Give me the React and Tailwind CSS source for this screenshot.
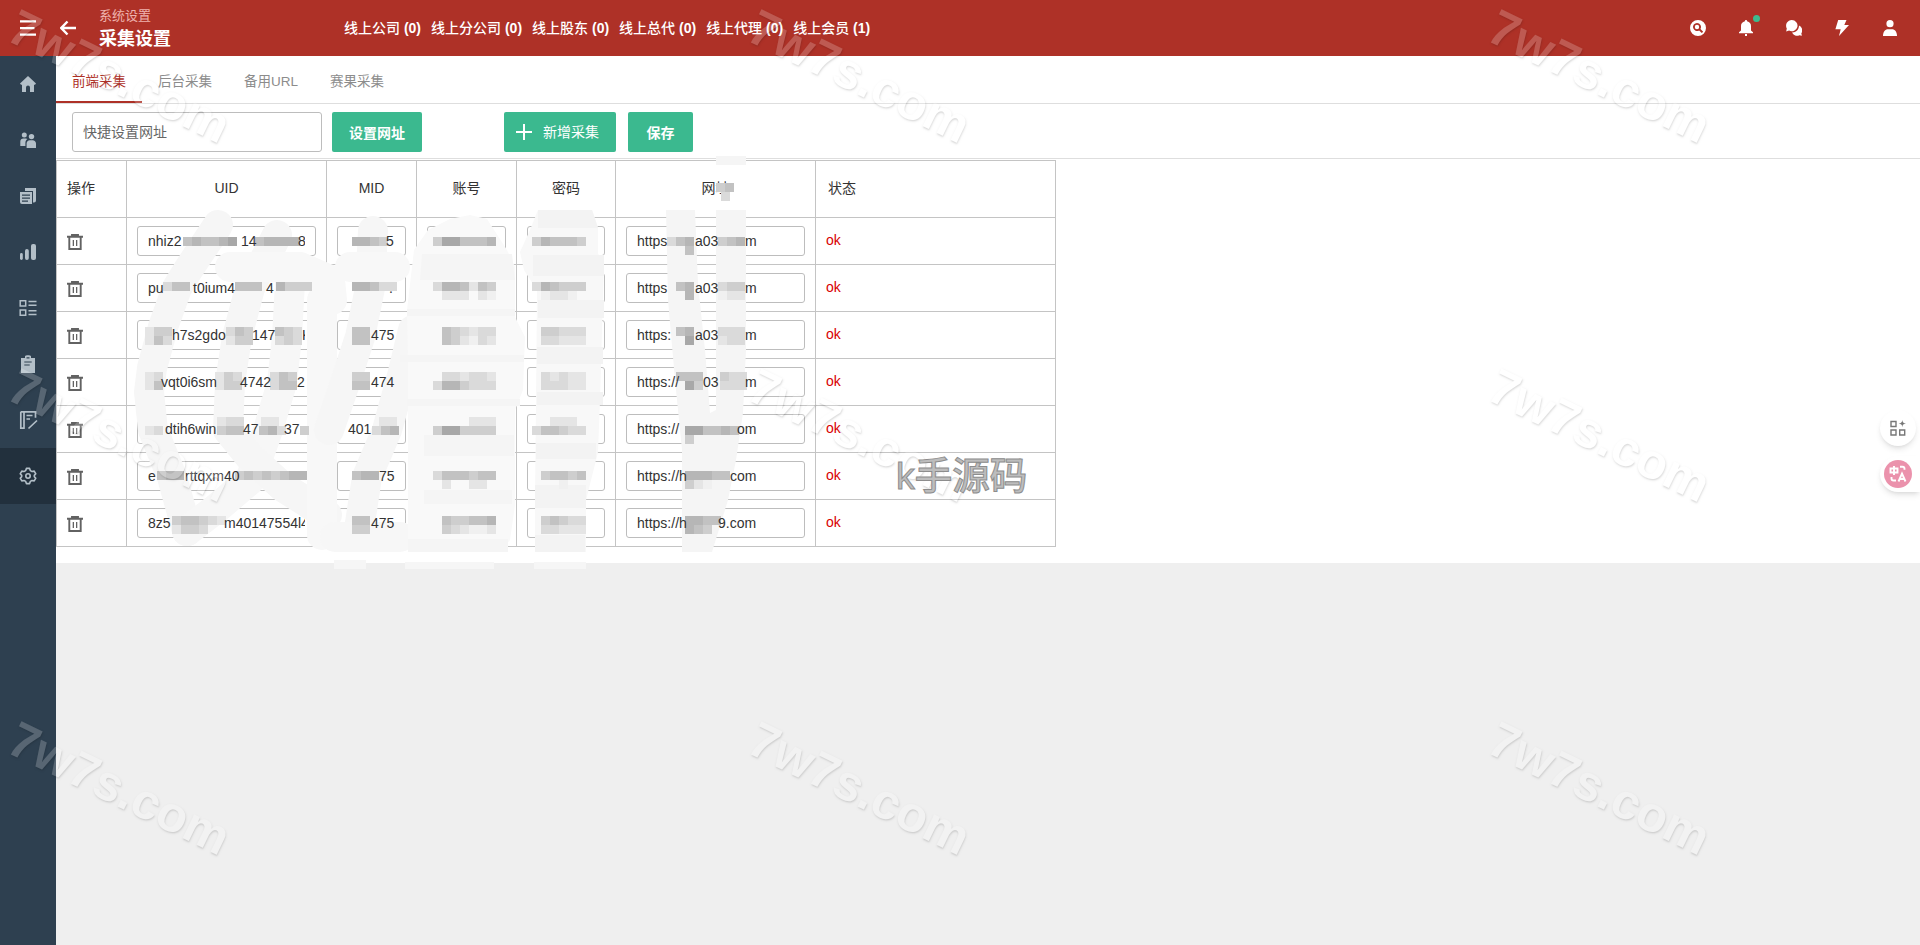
const onlineStats = [
  ['线上公司', 0],
  ['线上分公司', 0],
  ['线上股东', 0],
  ['线上总代', 0],
  ['线上代理', 0],
  ['线上会员', 1],
]

const tabs = ['前端采集', '后台采集', '备用URL', '赛果采集']

// every value is a list of [text, width] runs, the masked parts are empty runs
const rows = [
  {
    uid: [['nhiz2', 93], ['14', 57], ['8', 10]],
    mid: [['', 38], ['5', 9]],
    url: [['https', 58], ['a03', 50], ['m', 14]],
  },
  {
    uid: [['pu', 45], ['t0ium4', 73], ['4', 12]],
    mid: [['', 41], ['.', 5]],
    url: [['https', 58], ['a03', 50], ['m', 14]],
  },
  {
    uid: [['', 24], ['h7s2gdo', 80], ['147', 50], ['K', 10]],
    mid: [['', 23], ['475', 24]],
    url: [['https:', 58], ['a03', 50], ['m', 14]],
  },
  {
    uid: [['', 13], ['vqt0i6sm', 79], ['4742', 57], ['2', 10]],
    mid: [['', 23], ['474', 24]],
    url: [['https://', 66], ['03', 42], ['m', 14]],
  },
  {
    uid: [['', 17], ['dtih6win', 78], ['47', 41], ['37', 20]],
    mid: [['401', 40]],
    url: [['https://', 100], ['om', 22]],
  },
  {
    uid: [['e', 37], ['rttqxm40', 90]],
    mid: [['', 31], ['75', 17]],
    url: [['https://h', 93], ['com', 30]],
  },
  {
    uid: [['8z5', 76], ['m40147554l4', 90]],
    mid: [['', 23], ['475', 24]],
    url: [['https://h', 81], ['9.com', 42]],
  },
]

const shades = {
  1: '#f0f0f0',
  2: '#e5e5e5',
  3: '#dadada',
  4: '#cecece',
  5: '#c2c2c2',
  6: '#b6b6b6',
  7: '#a8a8a8',
}

// [x, y, one shade for each 9px cell]
const mosaic = [
  [716, 183, '45'], [721, 192, '3'],
  [183, 237, '565567'], [255, 237, '56666'], [352, 237, '6654'], [433, 237, '4775556'], [532, 237, '465554'],
  [667, 237, '356'], [685, 246, '5'], [718, 237, '456'],
  [163, 282, '355'], [235, 282, '555'], [276, 282, '6444'], [352, 282, '66533'], [433, 282, '3665254'],
  [442, 291, '222021'], [532, 282, '365444'], [541, 291, '1221'], [676, 282, '56'], [685, 291, '6'],
  [718, 282, '344'], [718, 291, '122'],
  [145, 327, '244'], [145, 336, '253'], [226, 327, '354'], [226, 336, '244'], [275, 327, '543'], [275, 336, '343'],
  [352, 327, '55'], [352, 336, '55'], [442, 327, '543233'], [442, 336, '542132'], [541, 327, '44333'], [541, 336, '33222'],
  [676, 327, '56'], [685, 336, '7'], [718, 327, '333'], [718, 336, '233'],
  [145, 372, '23'], [145, 381, '25'], [215, 372, '243'], [215, 381, '244'], [270, 372, '354'], [270, 381, '355'],
  [352, 372, '44'], [352, 381, '55'], [442, 372, '332332'], [433, 381, '3664333'], [541, 372, '32322'], [541, 381, '33322'],
  [676, 372, '555'], [685, 381, '74'], [720, 372, '433'], [720, 381, '333'],
  [145, 426, '23'], [217, 417, '233'], [217, 426, '455'], [261, 417, '22'], [259, 426, '563'], [300, 426, '4'],
  [379, 417, '22'], [372, 426, '356'], [433, 426, '4774444'], [469, 417, '222'], [532, 426, '355433'], [550, 417, '222'],
  [685, 426, '775565'], [685, 435, '4'],
  [157, 471, '566'], [235, 471, '45454566'], [352, 471, '566'], [433, 471, '3555455'], [442, 480, '20022'],
  [541, 471, '45545'], [559, 480, '1'], [685, 471, '66655'], [685, 480, '421'],
  [172, 516, '455432'], [172, 525, '2443'], [352, 516, '55'], [352, 525, '44'], [442, 516, '544556'], [442, 525, '432112'],
  [541, 516, '45433'], [541, 525, '33222'], [685, 516, '6655'], [685, 525, '654'],
]

const watermarks = [
  'left-[12px] -top-px',
  'left-[752px] -top-px',
  'left-[1492px] -top-px',
  'left-[12px] top-[358px]',
  'left-[752px] top-[358px]',
  'left-[1492px] top-[358px]',
  'left-[12px] top-[711px]',
  'left-[752px] top-[711px]',
  'left-[1492px] top-[711px]',
]

const Icon = ({ children, className = 'size-4' }) => (
  <svg viewBox="0 0 16 16" fill="currentColor" className={className}>
    {children}
  </svg>
)

const Header = () => (
  <header className="flex h-14 shrink-0 items-center bg-[#ae3127] pl-5 pr-[22px] text-white">
    <Icon>
      <path d="M0 .3h16v2.300H0zM0 6.900h14.500v2.300H0zM0 13.400h16v2.300H0z" />
    </Icon>
    <Icon className="ml-6 size-4">
      <path d="M7.500 1.500 1.300 8l6.200 6.500M1.500 8H16" fill="none" stroke="currentColor" strokeWidth="2.400" />
    </Icon>
    <div className="ml-[23px] w-[245px] pt-[2px]">
      <div className="text-[13px] leading-[17px] text-[#efb3ae]">系统设置</div>
      <div className="pt-[2px] text-lg font-bold leading-[26px]">采集设置</div>
    </div>
    <div className="flex gap-[10px] text-sm font-medium">
      {onlineStats.map(([name, count]) => (
        <span key={name} className="whitespace-nowrap">
          {name} <b>({count})</b>
        </span>
      ))}
    </div>
    <div className="ml-auto flex items-center gap-8">
      <Icon>
        <path fillRule="evenodd" d="M8 0a8 8 0 1 1 0 16A8 8 0 0 1 8 0Zm-1 3a4 4 0 1 0 2.100 7.400l2.700 2.700 1.400-1.400-2.700-2.700A4 4 0 0 0 7 3Zm0 1.800a2.200 2.200 0 1 1 0 4.400 2.200 2.200 0 0 1 0-4.400Z" />
      </Icon>
      <div className="relative">
        <Icon>
          <path d="M8 0c.7 0 1 .5 1.100 1.200C11.600 1.800 13 3.500 13 6v4.500l2 1.800v1H1v-1l2-1.800V6c0-2.500 1.400-4.200 3.900-4.800C7 .5 7.300 0 8 0ZM7 14h2v2H7z" />
        </Icon>
        <span className="absolute -right-[6px] -top-[5px] size-[7px] rounded-full bg-[#3dbb8e]" />
      </div>
      <Icon>
        <path d="M5.800 0a5.800 5.600 0 1 1-2.700 10.600L.2 11.400l.6-2.900A5.700 5.700 0 0 1 5.800 0Z" />
        <path d="M13 5.600a5 5 0 0 1 2.300 7.600l.6 2.600-2.500-.5A5.500 5.500 0 0 1 6 12.600c4 .2 7-3 7-7Z" />
      </Icon>
      <Icon>
        <path d="M4.200 0h8.300L10.300 5H15L5 16l1.700-6.800H1.400z" />
      </Icon>
      <Icon>
        <circle cx="8" cy="3.700" r="3.600" />
        <path d="M1 16c0-4.200 2.200-6.800 5-6.800h4c2.800 0 5 2.600 5 6.800z" />
      </Icon>
    </div>
  </header>
)

const menuIcons = [
  <path d="m8 0 8 7.500-1 1.200h-1V16h-4v-4.500a2 2 0 0 0-4 0V16H2V8.700H1L0 7.500z" />,
  <>
    <circle cx="4.300" cy="2.900" r="2.500" />
    <circle cx="11.500" cy="4.600" r="2.700" />
    <path d="M.3 14V9.500C.3 7.500 1.700 6.500 3.300 6.500h2.500c.7 0 1.200.2 1.600.6C6 8 5.400 9.300 5.400 11v3zM6.600 16v-4.500c0-2 1.400-3.300 3.200-3.300h2.900c1.800 0 3.300 1.300 3.300 3.300V16z" />
  </>,
  <>
    <path d="M5 0h11v12.500a2 2 0 0 1-2 2h-1V3H5z" />
    <path fillRule="evenodd" d="M0 4h12v12H2a2 2 0 0 1-2-2zm2 2.600v1.200h8V6.600zm0 3v1.200h8V9.600zm0 3v1.200h6v-1.200z" />
  </>,
  <>
    <rect x="0" y="9" width="2.800" height="7" rx="1.400" />
    <rect x="5" y="5" width="3.800" height="11" rx="1.900" />
    <rect x="11" y="0" width="5" height="16" rx="2" />
  </>,
  <path d="M.2.7h5.500v5.200H.2zM.2 10h5.500v5.200H.2zM8.500 1.500h8M8.500 5.300h8M8.500 10.800h8M8.500 14.600h8" fill="none" stroke="currentColor" strokeWidth="1.500" />,
  <path fillRule="evenodd" d="M5 .3C5.500-1 10.500-1 11 .3V2h4v15H1V2h4zm1.500.9v1.400h3V1.200zM4.300 5.400v1.200h7.400V5.400zm0 3v1.200h5.400V8.400z" />,
  <path d="M.8-.2h14.700v6M.8-.2v16.400h4M4-.2v16.400M6.500 3.500h6M6.500 7h3.500M8.500 16.500l8.500-8" fill="none" stroke="currentColor" strokeWidth="1.700" />,
  <>
    <path d="M6.400.4h3.200l.7 2.200 1.700.9 2.200-.4 1.600 2.700-1.500 1.600v1.200l1.500 1.600-1.600 2.700-2.200-.4-1.700.9-.7 2.200H6.400l-.7-2.200-1.700-.9-2.200.4-1.600-2.700 1.500-1.600V7.400L.2 5.800l1.600-2.700 2.200.4 1.700-.9z" fill="none" stroke="currentColor" strokeWidth="1.600" strokeLinejoin="round" />
    <circle cx="8" cy="8" r="2.200" fill="none" stroke="currentColor" strokeWidth="1.600" />
  </>,
]

const Sidebar = () => (
  <nav className="w-14 shrink-0 bg-[#2e4050] text-[#b3bfc8]">
    {menuIcons.map((icon, i) => (
      <div
        key={i}
        className={i === 7 ? 'flex h-14 items-center justify-center bg-[#22303d]' : 'flex h-14 items-center justify-center'}
      >
        <Icon className="size-4 overflow-visible">{icon}</Icon>
      </div>
    ))}
  </nav>
)

const Tabs = () => (
  <div className="flex h-12 border-b border-[#dedede] text-[13.500px] text-[#8c8c8c]">
    {tabs.map((tab, i) => (
      <div
        key={tab}
        className={
          i === 0
            ? 'flex w-[86px] items-center justify-center border-b-2 border-[#ae3127] pt-[7px] text-[#ae3127]'
            : 'flex w-[86px] items-center justify-center pt-[5px]'
        }
      >
        {tab}
      </div>
    ))}
  </div>
)

const Toolbar = () => (
  <div className="flex h-[55px] items-center border-b border-[#dedede] pl-4 pt-[2px] text-sm">
    <div className="flex h-10 w-[250px] items-center rounded-[3px] border border-[#bdbdbd] px-[10px] text-[#666]">
      快捷设置网址
    </div>
    <button className="ml-[10px] h-10 w-[90px] rounded-xs bg-[#3bb98f] pt-px font-bold text-white">设置网址</button>
    <button className="ml-[82px] flex h-10 w-28 items-center rounded-xs bg-[#3bb98f] pl-3 text-white">
      <Icon>
        <path d="M7 0h2v7h7v2H9v7H7V9H0V7h7z" />
      </Icon>
      <span className="ml-[11px]">新增采集</span>
    </button>
    <button className="ml-3 h-10 w-[65px] rounded-xs bg-[#3bb98f] pt-px font-bold text-white">保存</button>
  </div>
)

const Field = ({ runs = [] }) => (
  <div className="h-[30px] overflow-hidden whitespace-nowrap rounded-[3px] border border-[#bdbdbd] px-[10px] leading-7 text-[#333]">
    <div className="relative z-10 overflow-hidden">
      {runs.map(([text, width], i) => (
        <span key={i} className="inline-block h-7 align-top" style={{ width }}>
          {text}
        </span>
      ))}
    </div>
  </div>
)

const TrashIcon = () => (
  <Icon className="mt-px size-4 text-[#626262]">
    <path d="M0 2.800h16M2.300 3v12h11.400V3M5 2.500V.8h6v1.700" fill="none" stroke="currentColor" strokeWidth="1.900" />
    <path d="M5.700 6h1.300v6H5.700zM9 6h1.300v6H9z" />
  </Icon>
)

const Mask = () => (
  <svg viewBox="56 150 760 420" className="pointer-events-none absolute -top-[10px] left-0 h-[420px] w-[760px]">
    <g fill="none" stroke="#f6f6f6" strokeWidth="30" strokeLinecap="round" strokeLinejoin="round">
      <path d="M218 225 188 270 177 288 163 327 152 368 149 392 153 430 172 477 187 531" />
      <path d="M290 283 287 337 282 383 268 430 250 480 217 508 187 531" stroke="#f7f7f7" />
      <path d="M277 235 250 288 237 337 230 383 228 430 250 457 283 487 327 515" />
      <path d="M230 267 300 267 330 280 332 300" stroke="#f8f8f8" />
      <path d="M322 300V535" stroke="#f8f8f8" />
      <path d="M373 231 370 288 360 337 345 383 329 430" />
      <path d="M413 330 403 372 387 430 367 477 360 523" />
      <path d="M335 537 400 537" stroke="#f7f7f7" />
      <path d="M350 267 395 267" stroke="#f8f8f8" />
    </g>
    <path d="M470 215 487 219 507 250 515 267V317L525 337 523 390 515 410V505L510 540 500 552H408V360L407 310 414 250 428 230 450 219Z" fill="#f9f9f9" />
    <path d="M422 254H512L515 280H420ZM407 309H515V316H407ZM400 355H524V362H400ZM407 399H520V406H407ZM424 435H514V456H424ZM424 490H512V504H424ZM408 539H508V552H408Z" fill="#f5f5f5" />
    <path d="M538 210H592L598 228V254L604 260 600 400 598 452 586 500V552H535V500L536 400 537 290 524 270 520 252 530 230Z" fill="#f8f8f8" />
    <path d="M538 210H592L598 228H538ZM533 255H604V276H533ZM538 300H604V318H538ZM537 347H603V364H537ZM537 392H603V405H537ZM536 443H596V459H536ZM535 485H586V508H535ZM535 535H585V552H535Z" fill="#f3f3f3" />
    <path d="M666 210H695L698 284 705 350 710 413 716 410V210H746V350L743 413 736 460 728 500 712 552H682V450L675 380 668 300ZM716 156H746V165H716Z" fill="#f5f5f5" />
    <path d="M334 560H366V569H334ZM405 562H494V569H405ZM534 562H586V569H534Z" fill="#f6f6f6" />
    <g shapeRendering="crispEdges">
      {mosaic.map(([x, y, cells]) =>
        cells.split('').map((c, i) => (
          shades[c] && <rect key={`${x}-${y}-${i}`} x={x + i * 9} y={y} width="9" height="9" fill={shades[c]} />
        ))
      )}
    </g>
  </svg>
)

const CollectTable = () => (
  <div className="relative mt-[1px] text-sm text-[#333]">
    <table className="w-[1000px] table-fixed border-collapse [&_td]:border [&_td]:border-[#c4c4c4] [&_td]:px-[10px] [&_td]:py-0 [&_th]:border [&_th]:border-[#c4c4c4] [&_th]:pb-[2px] [&_th]:font-normal">
      <colgroup>
        <col className="w-[70px]" />
        <col className="w-[200px]" />
        <col className="w-[90px]" />
        <col className="w-[100px]" />
        <col className="w-[99px]" />
        <col className="w-[200px]" />
        <col />
      </colgroup>
      <thead>
        <tr className="h-[57px]">
          <th className="pl-[10px] text-left">操作</th>
          <th>UID</th>
          <th>MID</th>
          <th>账号</th>
          <th>密码</th>
          <th>网址</th>
          <th className="pl-3 text-left">状态</th>
        </tr>
      </thead>
      <tbody>
        {rows.map((row, i) => (
          <tr key={i} className="h-[47px]">
            <td><TrashIcon /></td>
            <td><Field runs={row.uid} /></td>
            <td><Field runs={row.mid} /></td>
            <td><Field /></td>
            <td><Field /></td>
            <td><Field runs={row.url} /></td>
            <td><div className="pb-[2px] text-[#d80000]">ok</div></td>
          </tr>
        ))}
      </tbody>
    </table>
    <Mask />
  </div>
)

const FloatingTools = () => (
  <div className="absolute right-0 top-[410px] flex flex-col items-end gap-[10px]">
    <div className="mr-1 flex size-9 items-center justify-center rounded-full bg-white text-[#777] shadow-md">
      <Icon>
        <path d="M1 1.500h5v5H1zM1 10h5v5H1zM9.700 10h5v5h-5z" fill="none" stroke="currentColor" strokeWidth="1.400" />
        <path d="M12.300 0c.3 2.500 1 3.200 3.700 3.600-2.700.4-3.400 1.100-3.700 3.700-.3-2.600-1-3.300-3.700-3.700 2.700-.4 3.400-1.100 3.700-3.600Z" />
      </Icon>
    </div>
    <div className="flex h-9 w-10 items-center rounded-l-full bg-white pl-1 shadow-md">
      <div className="flex size-7 items-center justify-center rounded-full bg-[#eb92ac] text-white">
        <svg viewBox="0 0 18 18" className="size-[18px]" fill="none" stroke="currentColor" strokeWidth="1.900">
          <path d="M1.500 3.500h7v4h-7zM5 1v9M11 1.800h2.500a2 2 0 0 1 2 2v1M2.500 12v1.500a2 2 0 0 0 2 2H7M9.500 16.500 13 8.500l3.500 8M10.700 14h4.600" />
        </svg>
      </div>
    </div>
  </div>
)

const Watermarks = () => (
  <div className="pointer-events-none absolute inset-0 z-20 overflow-hidden">
    {watermarks.map((position) => (
      <div key={position} className={`absolute opacity-20 ${position}`}>
        <div
          className="origin-left rotate-[26deg] whitespace-nowrap text-[50px] font-bold leading-none text-white [text-shadow:1px_1px_2px_#000b]"
          style={{ fontFamily: '"Liberation Sans", sans-serif' }}
        >
          7w7s.com
        </div>
      </div>
    ))}
    <div className="absolute left-[896px] top-[450px] text-[37.500px] font-medium leading-[52px] text-[#bdbdbd] [-webkit-text-stroke:1px_#8d8d8d]">
      k手源码
    </div>
  </div>
)

const App = () => {
  return (
    <div className="relative flex h-[945px] w-full flex-col overflow-hidden bg-[#efefef] font-['Liberation_Sans','Noto_Sans_CJK_SC',sans-serif]">
      <Header />
      <div className="flex flex-1">
        <Sidebar />
        <main className="h-[507px] flex-1 bg-white">
          <Tabs />
          <Toolbar />
          <CollectTable />
        </main>
      </div>
      <FloatingTools />
      <Watermarks />
    </div>
  )
}

export default App
